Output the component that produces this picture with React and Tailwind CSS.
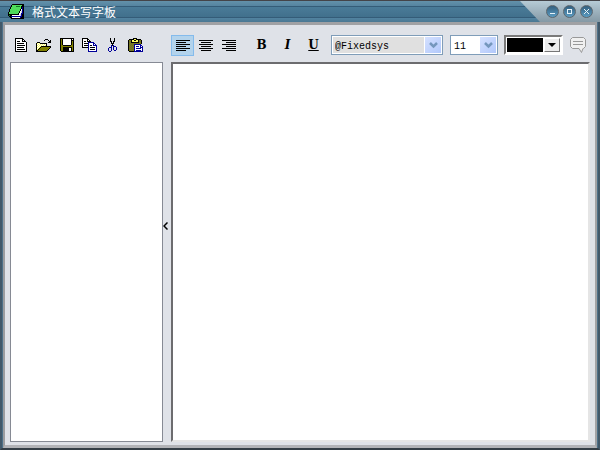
import React, { useState } from 'react';

const PALETTE = {
  '#': '#000000',
  w: '#ffffff',
  y: '#ffff66',
  o: '#808000',
  k: '#6b6b4a',
  b: '#000099',
  g: '#4fdc5c',
  d: '#117722',
  s: '#c8ccd8',
};

const ICONS = {
  logo: [
    '....############',
    '...#gggggggggg##',
    '...#ggggddddg###',
    '..#gggggggggg#b#',
    '..#gggggggggg#b#',
    '.#gggggggggg#wb#',
    '.#gggggggggg#wb#',
    '.#ggggggggg#wsb#',
    '#gggggggggg#wsb#',
    '#ggggggggg#wwbb#',
    '###########wsb##',
    '#d##wwwwwwwwsb##',
    '.##bbbbbbbbbbb##',
    '..##wwwwwwwwb###',
    '...#############',
  ],
  doc: [
    '########....',
    '#wwwwww##...',
    '#wwwwww#w#..',
    '#w###ww####.',
    '#wwwwwwwwww#',
    '#w#######ww#',
    '#wwwwwwwwww#',
    '#w########w#',
    '#wwwwwwwwww#',
    '#w#######ww#',
    '#wwwwwwwwww#',
    '#w########w#',
    '#wwwwwwwwww#',
    '############',
  ],
  open: [
    '.........###...',
    '........#...#.#',
    '.............##',
    '.###........###',
    '#ywy#######....',
    '#wywywywyw#....',
    '#ywywywywy#....',
    '#wywy##########',
    '#ywy#ooooooooo#',
    '#wy#ooooooooo#.',
    '#y#ooooooooo#..',
    '##ooooooooo#...',
    '###########....',
  ],
  save: [
    '##############',
    '#o#wwwwwwww#w#',
    '#o#wwwwwwww###',
    '#o#wwwwwwww#o#',
    '#o#wwwwwwww#o#',
    '#o#wwwwwwww#o#',
    '#o#wwwwwwww#o#',
    '#oo########oo#',
    '#oooooooooooo#',
    '#oo#########o#',
    '#oo######ww#o#',
    '#oo######ww#o#',
    '#oo######ww#o#',
    '.#############',
  ],
  copy: [
    '######.........',
    '#wwww##........',
    '#wwww#w#.......',
    '#w##w####......',
    '#wwwwwbbbbbb...',
    '#w####bwwwwbb..',
    '#wwwwwbwwwwbwb.',
    '#w####bw##wbbbb',
    '#wwwwwbwwwwwwwb',
    '######bw#####wb',
    '......bwwwwwwwb',
    '......bw#####wb',
    '......bwwwwwwwb',
    '......bbbbbbbbb',
  ],
  cut: [
    '..#...#..',
    '..#...#..',
    '..#...#..',
    '..##.##..',
    '...#.#...',
    '...###...',
    '....#....',
    '...b#b...',
    '...b.bbb.',
    '.bbb.b..b',
    'b..b.b..b',
    'b..b.b..b',
    'b..b..bb.',
    '.bb......',
  ],
  paste: [
    '.....####......',
    '.#####yy#####..',
    '#ok#yy##yy#ko#.',
    '#ko#yyyyyy#ok#.',
    '#ok########ko#.',
    '#kokokokokoko#.',
    '#okokobbbbbbb..',
    '#kokokbwwwwwbb.',
    '#okokobwbbbwbwb',
    '#kokokbwwwwwbbb',
    '#okokobwbbbbbwb',
    '#kokokbwwwwwwwb',
    '#okokobwbbbbbwb',
    '.#####bbbbbbbbb',
  ],
};

const PixelIcon = ({ name }) => {
  const rows = ICONS[name];
  const width = rows[0].length;

  return (
    <svg width={width} height={rows.length} viewBox={`0 0 ${width} ${rows.length}`} shapeRendering="crispEdges" aria-hidden="true">
      {rows.map((row, y) =>
        row.split('').map((c, x) =>
          PALETTE[c] ? <rect key={`${x}-${y}`} x={x} y={y} width="1" height="1" fill={PALETTE[c]} /> : null
        )
      )}
    </svg>
  );
};

// Long and short lines alternate, the short ones shifted by alignment
const AlignIcon = ({ align }) => {
  const shortX = { left: 0, center: 2, right: 4 }[align];

  return (
    <svg width="14" height="11" viewBox="0 0 14 11" shapeRendering="crispEdges" aria-hidden="true">
      {[0, 2, 4, 6, 8, 10].map((y, i) => (
        <rect key={y} x={i % 2 ? shortX : 0} y={y} width={i % 2 ? 10 : 14} height="1" />
      ))}
    </svg>
  );
};

const ToolButton = ({ label, active = false, onClick, children }) => (
  <button
    type="button"
    aria-label={label}
    onClick={onClick}
    className={`flex h-[21px] w-[23px] items-center justify-center border ${
      active ? 'border-[#84bbec] bg-[#b3d3ec]' : 'border-transparent'
    }`}
  >
    {children}
  </button>
);

const ComboBox = ({ label, options, className, selectClass }) => (
  <div className={`relative h-5 border border-[#7f9db9] bg-white p-px ${className}`}>
    <select
      aria-label={label}
      className={`block h-full w-full appearance-none pt-0.5 pl-0.5 font-['Liberation_Mono',monospace] text-[10px] leading-4 text-black outline-none ${selectClass}`}
    >
      {options.map((option) => (
        <option key={option}>{option}</option>
      ))}
    </select>
    <span className="pointer-events-none absolute inset-y-px right-px flex w-[17px] items-center justify-center border-l border-white bg-linear-to-br from-[#d5e1ff] to-[#b1c8fb]">
      <svg width="9" height="7" viewBox="0 0 9 7" aria-hidden="true">
        <path d="M1 1l3.5 3.5L8 1" fill="none" stroke="#7597bd" strokeWidth="2.5" />
      </svg>
    </span>
  </div>
);

const WindowButton = ({ label, children }) => (
  <button
    type="button"
    aria-label={label}
    className="flex size-[13px] items-center justify-center rounded-full border border-[#5c656c] bg-linear-to-b from-[#34607f] to-[#5b9cc2]"
  >
    <svg width="7" height="7" viewBox="0 0 7 7" fill="none" stroke="#e6f2f8" strokeWidth="1" aria-hidden="true">
      {children}
    </svg>
  </button>
);

const TitleBar = () => (
  <header className="flex h-[22px] shrink-0 items-stretch border-t border-[#444449] bg-[linear-gradient(#6391aa,#5584a0_5px,#345c78_5px,#345c78_6px,#4a7b98_6px,#41708c_16px,#345c78_16px,#345c78_17px,#5283a0_17px,#4a7893)]">
    <div className="flex flex-1 items-center gap-2 pl-2">
      <PixelIcon name="logo" />
      <h1 className="font-['Noto_Sans_CJK_SC',sans-serif] text-xs leading-5 text-white">格式文本写字板</h1>
    </div>
    <div className="flex w-20 items-center justify-end gap-1 bg-linear-to-b from-[#b6cbd6] to-[#8599a5] pr-[7px] [clip-path:polygon(0_0,100%_0,100%_100%,20px_100%)]">
      <WindowButton label="最小化">
        <path d="M1 5.5h5" />
      </WindowButton>
      <WindowButton label="最大化">
        <rect x="1.5" y="1.5" width="4" height="4" />
      </WindowButton>
      <WindowButton label="关闭">
        <path d="M1 1l5 5M6 1L1 6" />
      </WindowButton>
    </div>
  </header>
);

export default function App() {
  const [align, setAlign] = useState('left');

  return (
    <div className="flex h-screen flex-col bg-[#4d7088]">
      <TitleBar />
      <div className="flex flex-1 flex-col border-x-2 border-b-2 border-x-[#42596a] border-b-[#343e46] px-px">
        <main className="flex flex-1 border-2 border-t-3 border-b-3 border-t-[#a0a1a4] border-r-[#a2a3a6] border-b-[#b2b3b7] border-l-[#9c9da0] bg-[#dfe2e8] px-[5px] pb-[3px]">
          <section className="flex w-[153px] shrink-0 flex-col">
            <div className="-ml-px flex h-[37px] shrink-0 items-center pt-[3px]">
              <ToolButton label="新建"><PixelIcon name="doc" /></ToolButton>
              <ToolButton label="打开"><PixelIcon name="open" /></ToolButton>
              <ToolButton label="保存"><PixelIcon name="save" /></ToolButton>
              <ToolButton label="复制"><PixelIcon name="copy" /></ToolButton>
              <ToolButton label="剪切"><PixelIcon name="cut" /></ToolButton>
              <ToolButton label="粘贴"><PixelIcon name="paste" /></ToolButton>
            </div>
            <div className="flex-1 border border-[#868a94] bg-white" />
          </section>

          <button type="button" aria-label="折叠" className="flex w-2 shrink-0 items-center justify-start pb-4">
            <svg width="5" height="8" viewBox="0 0 5 8" fill="none" stroke="#000" strokeWidth="1.5" aria-hidden="true">
              <path d="M4.5 0.5L1 4l3.5 3.5" />
            </svg>
          </button>

          <section className="flex min-w-0 flex-1 flex-col">
            <div className="flex h-[37px] shrink-0 items-center pt-[3px]">
              <div className="flex">
                <ToolButton label="左对齐" active={align === 'left'} onClick={() => setAlign('left')}>
                  <AlignIcon align="left" />
                </ToolButton>
                <ToolButton label="居中" active={align === 'center'} onClick={() => setAlign('center')}>
                  <AlignIcon align="center" />
                </ToolButton>
                <ToolButton label="右对齐" active={align === 'right'} onClick={() => setAlign('right')}>
                  <AlignIcon align="right" />
                </ToolButton>
              </div>
              <div className="ml-2.5 flex gap-[3px] font-['DejaVu_Serif',serif] text-[12px] leading-4 font-bold">
                <ToolButton label="粗体">B</ToolButton>
                <ToolButton label="斜体"><i>I</i></ToolButton>
                <ToolButton label="下划线"><u>U</u></ToolButton>
              </div>
              <ComboBox label="字体" options={['@Fixedsys']} className="ml-1.5 w-28" selectClass="bg-[#e0e0e0]" />
              <ComboBox label="字号" options={['11']} className="ml-[7px] w-12" selectClass="bg-white" />
              <button
                type="button"
                aria-label="颜色"
                className="ml-1.5 flex h-5 w-[59px] border-2 border-t-[#7a7a7a] border-r-white border-b-white border-l-[#7a7a7a] bg-white p-px"
              >
                <span className="h-full flex-1 bg-black" />
                <span className="ml-px flex h-full w-4 items-center justify-center border border-t-white border-r-[#777] border-b-[#777] border-l-white bg-[#ececec]">
                  <svg width="8" height="4" viewBox="0 0 8 4" aria-hidden="true">
                    <path d="M0 0h8L4 4z" />
                  </svg>
                </span>
              </button>
              <button type="button" aria-label="批注" className="ml-[7px]">
                <svg width="16" height="16" viewBox="0 0 16 16" fill="#f0f0f0" stroke="#999999" aria-hidden="true">
                  <path d="M2.5 .5h11l2 2v7l-2 2h-.5l-1.5 4-2.5-4h-6.5l-2-2v-7z" />
                  <path d="M3 4.5h10M3 7.5h10" />
                </svg>
              </button>
            </div>
            <textarea
              aria-label="正文"
              className="block w-full flex-1 resize-none border-2 border-t-[#6c6c6f] border-r-[#e5e5e5] border-b-[#e5e5e5] border-l-[#6c6c6f] bg-white p-1 text-sm outline-none"
            />
          </section>
        </main>
      </div>
    </div>
  );
}
